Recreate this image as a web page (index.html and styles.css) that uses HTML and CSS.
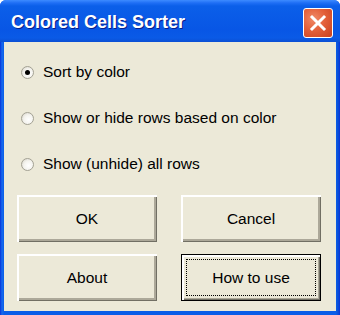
FILE: index.html
```html
<!DOCTYPE html>
<html lang="en">
<head>
  <meta charset="UTF-8" />
  <title>Colored Cells Sorter</title>
  <link rel="stylesheet" href="styles.css">
</head>
<body>
  <div class="window">
    <div class="titlebar">
      <span class="title">Colored Cells Sorter</span>
      <div class="close">
        <svg width="18" height="18" viewBox="0 0 18 18">
          <path d="M3 3 L15 15 M15 3 L3 15" stroke="#fff" stroke-width="3" stroke-linecap="square"/>
        </svg>
      </div>
    </div>
    <div class="client">
      <label class="option">
        <span class="radio checked"></span>
        Sort by color
      </label>
      <label class="option">
        <span class="radio"></span>
        Show or hide rows based on color
      </label>
      <label class="option">
        <span class="radio"></span>
        Show (unhide) all rows
      </label>
      <div class="buttons">
        <button>OK</button>
        <button>Cancel</button>
        <button>About</button>
        <button class="default"><span class="focus">How to use</span></button>
      </div>
    </div>
  </div>
</body>
</html>
```

FILE: styles.css
```css
body {
  margin: 0;
  font-family: 'Liberation Sans', Arial, sans-serif;
  background: #fff;
}
.window {
  width: 340px;
  height: 315px;
  background: linear-gradient(to right, #0831d9 0, #166aee 2px, #0a5de8 4px, #0a5de8 336px, #0a4fd8 338px, #0831d9 340px);
  display: flex;
  flex-direction: column;
  box-sizing: border-box;
  padding: 0 4px 4px 4px;
  border-radius: 6px 6px 0 0;
  overflow: hidden;
}
.titlebar {
  height: 42px;
  margin: 0 -4px;
  padding: 0 7px 0 11px;
  display: flex;
  align-items: center;
  justify-content: space-between;
  background: linear-gradient(to bottom, #3d8bff 0, #1e6ef5 3px, #0b5fe9 6px, #0856e5 30px, #0a5ae6 38px, #0b4fd4 42px);
}
.title {
  color: #fff;
  font-weight: bold;
  font-size: 18px;
  text-shadow: 1px 1px 0 #0a1e8a;
  margin-top: 2px;
}
.close {
  width: 28px;
  height: 28px;
  border: 1px solid #fff;
  border-radius: 3px;
  background: radial-gradient(circle at 35% 35%, #f08a68 0, #e3603a 45%, #c8401f 100%);
  display: flex;
  align-items: center;
  justify-content: center;
  margin-top: 4px;
}
.client {
  flex: 1;
  background: #ece9d8;
  padding: 7px 15px 0 13px;
  display: flex;
  flex-direction: column;
}
.option {
  height: 46px;
  display: flex;
  align-items: center;
  gap: 9px;
  padding-left: 4px;
  font-size: 15.5px;
  color: #000;
}
.radio {
  width: 11px;
  height: 11px;
  border-radius: 50%;
  border: 1px solid #a3a194;
  background: radial-gradient(circle at 60% 60%, #fff 0, #f4f3ee 50%, #d2cfc2 100%);
  position: relative;
}
.radio.checked::after {
  content: "";
  position: absolute;
  left: 3px;
  top: 3px;
  width: 5px;
  height: 5px;
  border-radius: 50%;
  background: #000;
}
.buttons {
  margin-top: 8px;
  display: grid;
  grid-template-columns: 140px 140px;
  column-gap: 24px;
  row-gap: 12px;
}
button {
  height: 47px;
  font-family: inherit;
  font-size: 15.5px;
  color: #000;
  background: #ece9d8;
  border: none;
  border-radius: 0;
  box-shadow: inset 1px 1px 0 #fff, inset 2px 2px 0 #fff, inset -1px -1px 0 #716f64, inset -2px -2px 0 #aca899, inset -3px -3px 0 #aca899;
  padding: 0;
}
button.default {
  border: 1px solid #000;
  box-shadow: inset 1px 1px 0 #fff, inset 2px 2px 0 #fff, inset -1px -1px 0 #716f64, inset -2px -2px 0 #aca899;
  padding: 4px;
  display: flex;
}
.focus {
  flex: 1;
  border: 1px dotted #000;
  display: flex;
  align-items: center;
  justify-content: center;
}
```
